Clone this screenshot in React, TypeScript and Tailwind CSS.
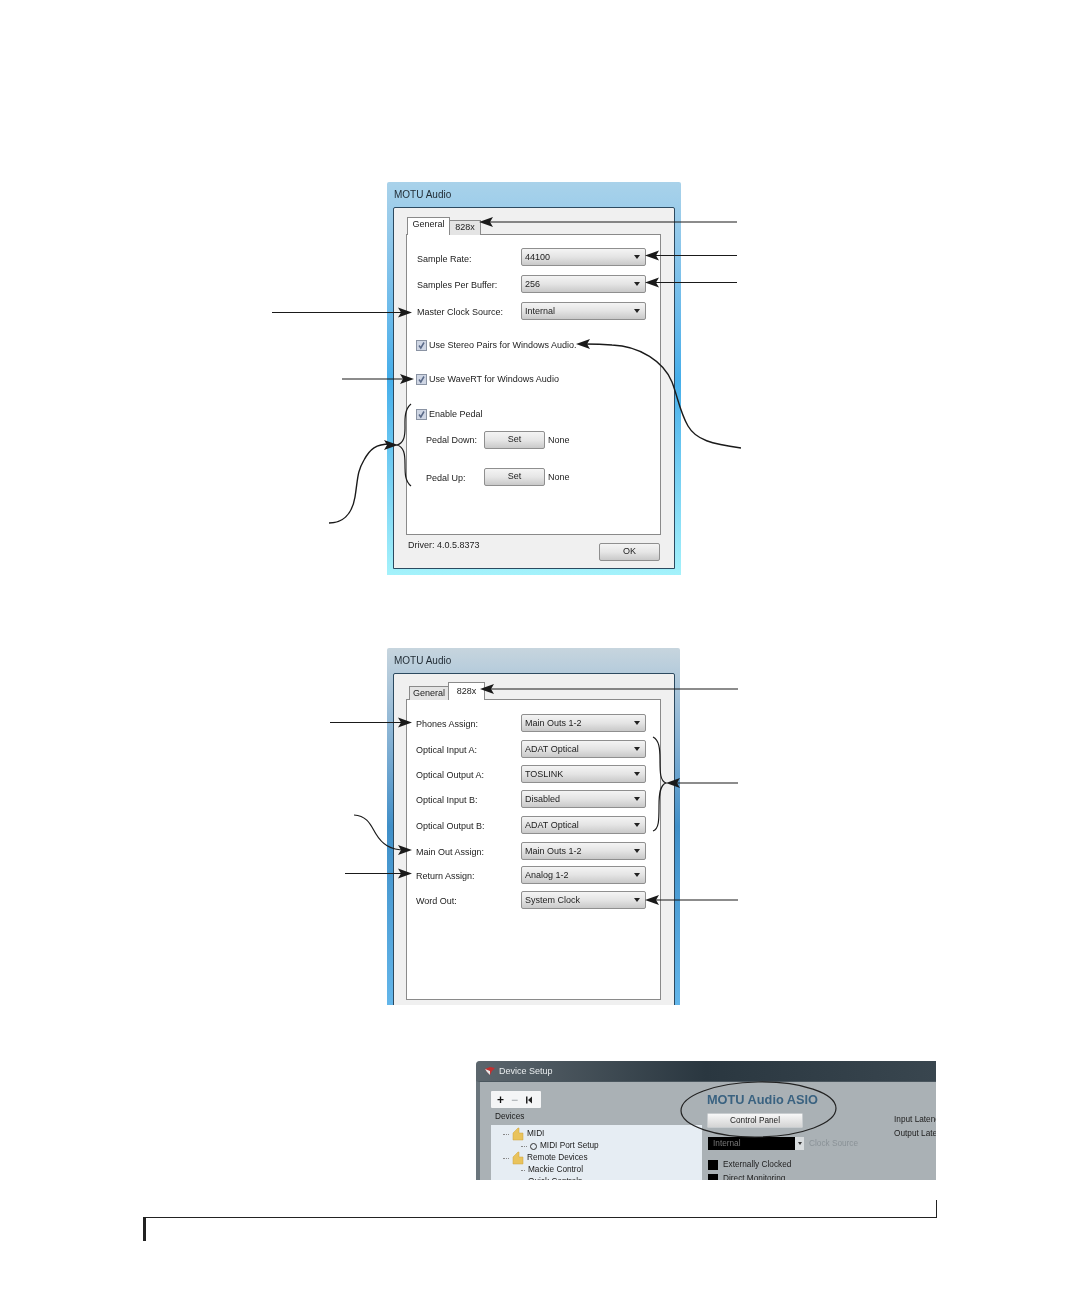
const FONT = "font-['Liberation_Sans',Arial,sans-serif]";

function Select({ value, className = "" }: { value: string; className?: string }) {
  return (
    <div className={`flex h-[18px] w-[125px] items-center justify-between rounded-[2px] border border-[#8f8f8f] bg-gradient-to-b from-[#f4f4f4] via-[#e4e4e4] to-[#c9c9c9] pl-[3px] pr-[5px] text-[#222] ${className}`}>
      <span className="-mt-px">{value}</span>
      <span className="h-0 w-0 border-x-[3px] border-t-[4px] border-x-transparent border-t-[#222]" />
    </div>
  );
}

function Check({ label }: { label: string }) {
  return (
    <div className="flex h-[14px] items-center gap-[2px]">
      <div className="flex h-[11px] w-[11px] items-center justify-center border border-[#8a93a3] bg-[#cfd6e4]">
        <svg width="9" height="9" viewBox="0 0 9 9"><path d="M2 4.5 L3.8 7 L7 1.5" fill="none" stroke="#5a6a88" strokeWidth="1.5" /></svg>
      </div>
      <span className="text-[#222]">{label}</span>
    </div>
  );
}

function SetButton({ label = "Set", className = "" }: { label?: string; className?: string }) {
  return (
    <div className={`flex h-[18px] w-[61px] items-center justify-center rounded-[2px] border border-[#8f8f8f] bg-gradient-to-b from-[#f4f4f4] via-[#e6e6e6] to-[#c9c9c9] text-[#222] ${className}`}>
      <span className="-mt-[2px]">{label}</span>
    </div>
  );
}

function TitleBar() {
  return <div className="flex h-[25px] items-center pl-[1px] text-[10px] text-[#1f2a33]">MOTU Audio</div>;
}

function GeneralDialog() {
  return (
    <div className="h-[393px] w-[294px] rounded-t-[2px] bg-gradient-to-b from-[#a9d2ea] via-[#45aeea] to-[#a4f2fb] px-[6px] pb-[6px]">
      <TitleBar />
      <div className="flex h-[362px] flex-col rounded-t-[2px] border border-[#2c4a60] bg-[#f0f0f0] px-[12px] pt-[9px]">
        <div className="relative z-10 -mb-px flex items-end">
          <div className="ml-[1px] flex h-[18px] w-[43px] items-center justify-center border border-b-0 border-[#8a8a8a] bg-white text-[#222]"><span className="-mt-[5px]">General</span></div>
          <div className="flex h-[15px] w-[31px] items-center justify-center border border-b-0 border-l-0 border-[#8a8a8a] bg-[#e4e4e4] text-[#222]"><span className="-mt-[3px]">828x</span></div>
        </div>
        <div className="h-[301px] w-[255px] border border-[#8a8a8a] bg-white pt-[13px]">
          <div className="flex h-[18px] items-center pl-[10px]"><span className="w-[104px] pt-[3px]">Sample Rate:</span><Select value="44100" /></div>
          <div className="mt-[9px] flex h-[18px] items-center pl-[10px]"><span className="w-[104px] pt-[2px]">Samples Per Buffer:</span><Select value="256" /></div>
          <div className="mt-[9px] flex h-[18px] items-center pl-[10px]"><span className="w-[104px] pt-[2px]">Master Clock Source:</span><Select value="Internal" /></div>
          <div className="mt-[18px] pl-[9px]"><Check label="Use Stereo Pairs for Windows Audio." /></div>
          <div className="mt-[20px] pl-[9px]"><Check label="Use WaveRT for Windows Audio" /></div>
          <div className="mt-[21px] pl-[9px]"><Check label="Enable Pedal" /></div>
          <div className="mt-[10px] flex h-[18px] items-center pl-[19px]"><span className="w-[58px]">Pedal Down:</span><SetButton /><span className="ml-[3px]">None</span></div>
          <div className="mt-[19px] flex h-[18px] items-center pl-[19px]"><span className="w-[58px] pt-[2px]">Pedal Up:</span><SetButton /><span className="ml-[3px]">None</span></div>
        </div>
        <div className="flex items-start justify-between pl-[2px] pr-[2px]">
          <span className="mt-[4px]">Driver: 4.0.5.8373</span>
          <SetButton label="OK" className="mt-[8px]" />
        </div>
      </div>
    </div>
  );
}

function Row828({ label, value, className = "" }: { label: string; value: string; className?: string }) {
  return (
    <div className={`flex h-[18px] items-center pl-[9px] ${className}`}>
      <span className="w-[105px] pt-[2px]">{label}</span>
      <Select value={value} />
    </div>
  );
}

function Dialog828() {
  return (
    <div className="h-[357px] w-[293px] overflow-hidden rounded-t-[2px] bg-gradient-to-b from-[#c7d5de] via-[#3f8fc8] to-[#63b6ea] pl-[6px] pr-[5px]">
      <TitleBar />
      <div className="h-[340px] rounded-t-[2px] border border-[#2c4a60] bg-[#f0f0f0] px-[12px] pt-[8px]">
        <div className="relative z-10 -mb-px flex items-end">
          <div className="ml-[3px] flex h-[14px] w-[39px] items-center justify-center border border-b-0 border-r-0 border-[#8a8a8a] bg-[#e4e4e4] text-[#222]"><span className="-mt-px">General</span></div>
          <div className="flex h-[18px] w-[37px] items-center justify-center border border-b-0 border-[#8a8a8a] bg-white text-[#222]"><span className="-mt-[2px]">828x</span></div>
        </div>
        <div className="h-[301px] w-[255px] border border-[#8a8a8a] bg-white pt-[14px]">
          <Row828 label="Phones Assign:" value="Main Outs 1-2" />
          <Row828 className="mt-[8px]" label="Optical Input A:" value="ADAT Optical" />
          <Row828 className="mt-[7px]" label="Optical Output A:" value="TOSLINK" />
          <Row828 className="mt-[7px]" label="Optical Input B:" value="Disabled" />
          <Row828 className="mt-[8px]" label="Optical Output B:" value="ADAT Optical" />
          <Row828 className="mt-[8px]" label="Main Out Assign:" value="Main Outs 1-2" />
          <Row828 className="mt-[6px]" label="Return Assign:" value="Analog 1-2" />
          <Row828 className="mt-[7px]" label="Word Out:" value="System Clock" />
        </div>
      </div>
    </div>
  );
}

function Folder() {
  return (
    <svg width="12" height="14" viewBox="0 0 12 14">
      <path d="M1 13 L1 6 Q3 4 6 1 L7 1 L7 6 L11 6 L11 13 Z" fill="#e9c35c" stroke="#cfa238" strokeWidth="0.5" />
    </svg>
  );
}

function TreeRow({ children, indent, icon, dash }: { children: React.ReactNode; indent: string; icon?: React.ReactNode; dash?: string }) {
  return (
    <div className={`flex h-[12px] items-center gap-[3px] ${indent}`}>
      {dash && <span className={`border-t border-dotted border-[#888] ${dash}`} />}
      {icon}
      <span>{children}</span>
    </div>
  );
}

function DeviceSetup() {
  return (
    <div className="h-[119px] w-[460px] overflow-hidden rounded-tl-[4px] bg-[#aab1b5] text-[8.25px]">
      <div className="flex h-[20px] items-center gap-[3px] bg-gradient-to-r from-[#5c666d] via-[#2a3740] to-[#39464f] pl-[8px] text-[9px] text-[#e8ecee]">
        <svg width="12" height="10" viewBox="0 0 12 10"><path d="M6 1 L11 2 L8 5 L6 9 L3 6 L1 3 Z" fill="#c23030" /><path d="M1 3 L6 5 L6 9 L3 6 Z" fill="#e8e8e8" /></svg>
        <span>Device Setup</span>
      </div>
      <div className="flex h-[99px] border-l-[4px] border-t border-[#4a565e] border-l-[#6a757c] pl-[11px]">
        <div className="w-[211px] shrink-0">
          <div className="mt-[9px] flex h-[17px] w-[50px] items-center gap-[7px] rounded-[1px] bg-[#f4f5f6] pl-[6px] text-[#111]">
            <span className="text-[12px] font-bold leading-none">+</span>
            <span className="text-[12px] leading-none text-[#9aa0a4]">−</span>
            <svg width="8" height="8" viewBox="0 0 8 8"><path d="M1 0.5H2.5V7.5H1Z M7 0.5V7.5L3 4Z" fill="#222" /></svg>
          </div>
          <div className="mt-[3px] h-[12px] pl-[4px] text-[#1a1a1a]">Devices</div>
          <div className="mt-[2px] h-[60px] bg-[#e6edf3] pt-[3px] text-[#222]">
            <TreeRow indent="pl-[12px]" dash="w-[6px]" icon={<Folder />}>MIDI</TreeRow>
            <TreeRow indent="pl-[30px]" dash="w-[6px]" icon={<span className="h-[7px] w-[7px] rounded-full border border-[#333]" />}>MIDI Port Setup</TreeRow>
            <TreeRow indent="pl-[12px]" dash="w-[6px]" icon={<Folder />}>Remote Devices</TreeRow>
            <TreeRow indent="pl-[30px]" dash="w-[4px]">Mackie Control</TreeRow>
            <TreeRow indent="pl-[30px]" dash="w-[4px]">Quick Controls</TreeRow>
          </div>
        </div>
        <div className="ml-[5px] w-[186px] shrink-0">
          <div className="mt-[10px] h-[16px] text-[12.75px] font-bold leading-[16px] text-[#3a6280]">MOTU Audio ASIO</div>
          <div className="mt-[5px] flex h-[15px] w-[96px] items-center justify-center rounded-[1px] border border-[#c8cccf] bg-gradient-to-b from-[#f8f8f8] to-[#d4d4d4] text-[#222]">Control Panel</div>
          <div className="ml-px mt-[9px] flex h-[13px] items-center">
            <div className="flex h-[13px] w-[87px] items-center bg-black pl-[5px] text-[#777]">Internal</div>
            <div className="flex h-[13px] w-[9px] items-center justify-center bg-[#d8dcde]"><span className="h-0 w-0 border-x-[2px] border-t-[3px] border-x-transparent border-t-[#333]" /></div>
            <span className="ml-[5px] text-[#8a9297]">Clock Source</span>
          </div>
          <div className="ml-px mt-[9px] flex h-[11px] items-center gap-[5px]"><span className="h-[10px] w-[10px] bg-black" />Externally Clocked</div>
          <div className="ml-px mt-[3px] flex h-[11px] items-center gap-[5px] whitespace-nowrap"><span className="h-[10px] w-[10px] bg-black" />Direct Monitoring</div>
        </div>
        <div className="ml-[1px] overflow-hidden whitespace-nowrap text-[#222]">
          <div className="mt-[31px] leading-[14px]">Input Latency</div>
          <div className="leading-[14px]">Output Latency</div>
        </div>
      </div>
    </div>
  );
}

function Head({ x, y, dir }: { x: number; y: number; dir: "l" | "r" }) {
  const s = dir === "l" ? 1 : -1;
  return <path d={`M${x} ${y} L${x + s * 14} ${y - 5} L${x + s * 11} ${y} L${x + s * 14} ${y + 5} Z`} fill="#1a1a1a" stroke="none" />;
}

function Annotations() {
  return (
    <svg className="pointer-events-none absolute left-0 top-0" width="1081" height="1297" viewBox="0 0 1081 1297" fill="none" stroke="#1a1a1a" strokeWidth="1.2">
      <path d="M737 222H485" /><Head x={479} y={222} dir="l" />
      <path d="M737 255.5H650" /><Head x={645} y={255.5} dir="l" />
      <path d="M737 282.5H650" /><Head x={645} y={282.5} dir="l" />
      <path d="M272 312.5H405" /><Head x={412} y={312.5} dir="r" />
      <path d="M342 379H408" /><Head x={414} y={379} dir="r" />
      <path d="M741 448C712 444 696 440 688 426C680 412 678 398 672 382C664 362 640 346 612 345C600 344 592 344 585 344" strokeWidth="1.4" /><Head x={576} y={344} dir="l" />
      <path d="M411 404C404 410 405 420 405 428C405 436 404 443 397 445C404 447 405 454 405 464C405 474 405 481 411 486" />
      <path d="M329 523C342 523 352 515 355 497C358 478 357 472 364 460C370 449 376 444 390 444" strokeWidth="1.4" /><Head x={398} y={445} dir="r" />

      <path d="M738 689H485" /><Head x={480} y={689} dir="l" />
      <path d="M330 722.5H405" /><Head x={412} y={722.5} dir="r" />
      <path d="M653 737C659 740 660 748 660 760C660 772 660 781 666 783C660 785 659 794 659 806C659 820 659 829 653 831" />
      <path d="M738 783H672" /><Head x={666} y={783} dir="l" />
      <path d="M354 815C368 816 371 826 376 834C382 844 390 850 405 850" /><Head x={412} y={850} dir="r" />
      <path d="M345 873.5H405" /><Head x={412} y={873.5} dir="r" />
      <path d="M738 900H650" /><Head x={645} y={900} dir="l" />

      <ellipse cx="758.5" cy="1109.5" rx="77.5" ry="27.5" stroke="#222" transform="rotate(-1 758.5 1109.5)" />
    </svg>
  );
}

export default function App() {
  return (
    <div className={`${FONT} relative h-[1297px] w-[1081px] overflow-hidden bg-white pt-[182px] text-[9px] leading-[12px] text-[#222]`}>
      <div className="ml-[387px] w-fit blur-[0.3px]"><GeneralDialog /></div>
      <div className="ml-[387px] mt-[73px] w-fit blur-[0.3px]"><Dialog828 /></div>
      <div className="ml-[476px] mt-[56px] w-fit blur-[0.3px]"><DeviceSetup /></div>
      <div className="ml-[143px] mt-[20px] h-[18px] w-[794px] border-b border-r border-[#222]" />
      <div className="ml-[143px] h-[23px] w-[3px] bg-[#222]" />
      <Annotations />
    </div>
  );
}
